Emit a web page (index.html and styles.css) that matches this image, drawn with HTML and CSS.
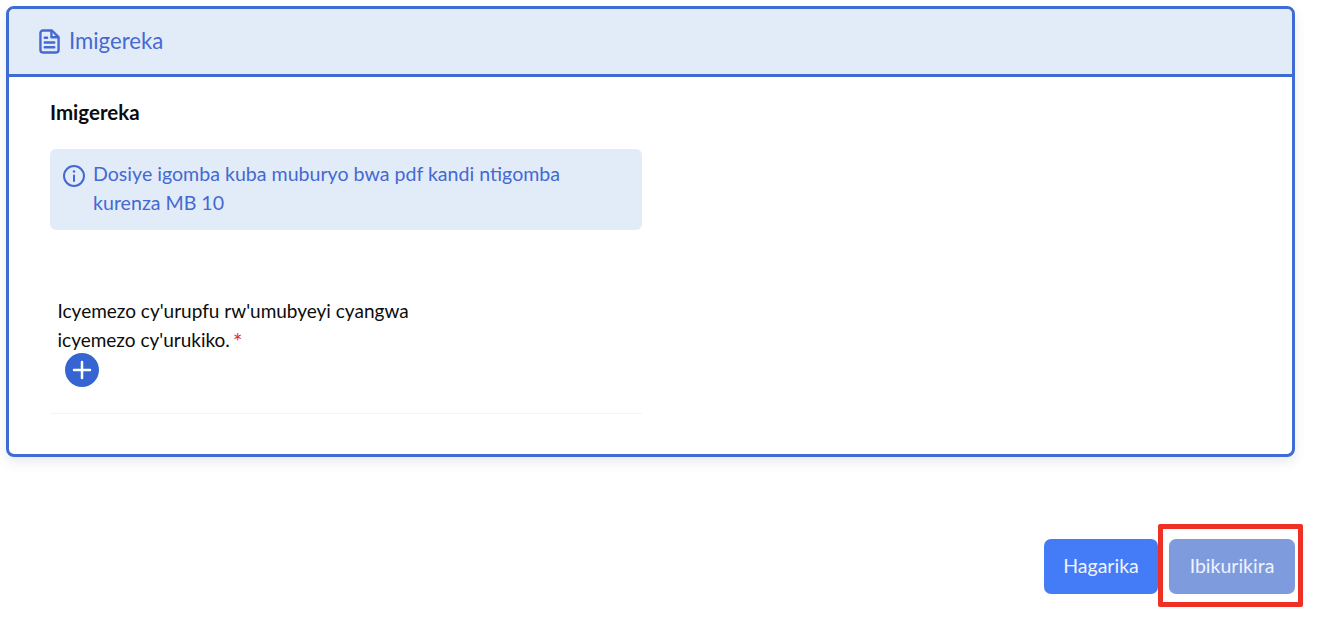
FILE: index.html
```html
<!DOCTYPE html>
<html lang="rw">
<head>
<meta charset="utf-8">
<title>Imigereka</title>
<link rel="stylesheet" href="styles.css">
</head>
<body>
<main class="page">
  <section class="card">
    <header class="card-header">
      <svg class="doc-icon" width="21" height="25" viewBox="0 0 22 26" fill="none" stroke="currentColor" stroke-width="2.500" stroke-linejoin="round" stroke-linecap="round">
        <path d="M4 1.500h9.500l7 7V22a2.500 2.500 0 0 1-2.500 2.500H4A2.500 2.500 0 0 1 1.500 22V4A2.500 2.500 0 0 1 4 1.500z"/>
        <path d="M13 2v6.500h7M6 9h2.500M6 14h10M6 19h10"/>
      </svg>
      <h2 class="card-title">Imigereka</h2>
    </header>
    <div class="card-body">
      <h3 class="section-title">Imigereka</h3>
      <div class="notice">
        <svg class="info-icon" width="24" height="24" viewBox="0 0 24 24" fill="none" stroke="currentColor" stroke-width="2" stroke-linecap="round">
          <circle cx="12" cy="12" r="10"/>
          <path d="M12 11.500v5.500"/>
          <path d="M12 7.400v.2" stroke-width="2.400"/>
        </svg>
        <p class="notice-text">Dosiye igomba kuba muburyo bwa pdf kandi ntigomba kurenza MB 10</p>
      </div>
      <div class="upload-row">
        <p class="upload-label">Icyemezo cy'urupfu rw'umubyeyi cyangwa icyemezo cy'urukiko. <span class="required">*</span></p>
        <button class="add-btn" type="button" aria-label="Add">
          <svg width="20" height="20" viewBox="0 0 20 20" stroke="#fff" stroke-width="2.500" stroke-linecap="round">
            <path d="M10 2v16M2 10h16"/>
          </svg>
        </button>
      </div>
    </div>
  </section>
  <footer class="actions">
    <button class="btn btn-primary" type="button">Hagarika</button>
    <span class="highlight-wrap">
      <button class="btn btn-disabled" type="button">Ibikurikira</button>
      <span class="highlight"></span>
    </span>
  </footer>
</main>
</body>
</html>
```
FILE: styles.css
```css
* {
  box-sizing: border-box;
}

html,
body {
  margin: 0;
  height: 100%;
  background: #fff;
}

body {
  font-family: "Lato", "Open Sans", sans-serif;
  overflow: hidden;
}

.page {
  padding: 6px 23px 0 6px;
}

.card {
  height: 451px;
  border: 3px solid #3f6cd4;
  border-radius: 8px;
  background: #fff;
  box-shadow: 0 5px 12px rgba(60, 80, 120, 0.12);
  overflow: hidden;
}

.card-header {
  display: flex;
  align-items: center;
  gap: 9px;
  height: 68px;
  padding: 0 0 1px 30px;
  background: #e2ecf9;
  border-bottom: 3px solid #3f6cd4;
  color: #4569d1;
}

.doc-icon {
  flex: none;
}

.card-title {
  margin: 0;
  font-size: 22.200px;
  font-weight: 400;
  line-height: 1;
}

.card-body {
  padding: 23px 0 0 41px;
}

.section-title {
  margin: 0;
  font-size: 20.500px;
  font-weight: 700;
  line-height: 24px;
  color: #0c0c0c;
}

.notice {
  display: flex;
  gap: 7px;
  width: 592px;
  height: 81px;
  margin-top: 25px;
  padding: 10px 24px 0 12px;
  background: #e2ecf9;
  border-radius: 6px;
  color: #4569d1;
}

.info-icon {
  flex: none;
  margin-top: 5px;
}

.notice-text {
  margin: 0;
  font-size: 19.600px;
  line-height: 29px;
}

.upload-row {
  width: 592px;
  height: 134px;
  margin-top: 50px;
  padding: 16px 8px 0 7.500px;
  border-bottom: 1px solid #f4f4f6;
}

.upload-label {
  width: 370px;
  margin: 0;
  font-size: 19px;
  line-height: 29px;
  color: #0c0c0c;
}

.required {
  margin-left: -2px;
  font-size: 23px;
  line-height: 0;
  vertical-align: -3px;
  color: #e0324f;
}

.add-btn {
  display: flex;
  align-items: center;
  justify-content: center;
  width: 34px;
  height: 34px;
  margin: -1px 0 0 7.500px;
  padding: 0;
  border: 0;
  border-radius: 50%;
  background: #3665d3;
}

.actions {
  display: flex;
  justify-content: flex-end;
  gap: 11px;
  margin-top: 82px;
}

.btn {
  height: 55px;
  padding: 0 0 2px;
  border: 0;
  border-radius: 7px;
  font-family: inherit;
  font-size: 19.500px;
  color: #eef3ff;
}

.btn-primary {
  width: 114px;
  background: #447cf7;
}

.btn-disabled {
  display: block;
  width: 126px;
  background: #7e9bde;
}

.highlight-wrap {
  position: relative;
  display: block;
}

.highlight {
  position: absolute;
  top: -15px;
  left: -11px;
  width: 145px;
  height: 83px;
  border: 5.500px solid #ee3124;
  border-radius: 2px;
}
```
